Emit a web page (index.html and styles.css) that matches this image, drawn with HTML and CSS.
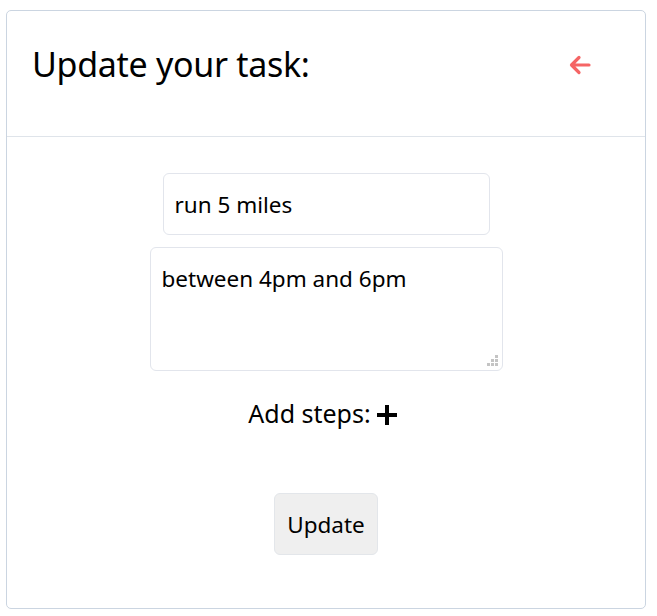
FILE: index.html
```html
<!DOCTYPE html>
<html>
<head>
<meta charset="utf-8">
<link rel="stylesheet" href="styles.css">
</head>
<body>
<div class="card">
  <div class="card-header">
    <h1 class="title">Update your task:</h1>
    <button class="back" aria-label="Back">
      <svg width="22" height="20" viewBox="0 0 22 20"><path d="M20 10H3M10 2.5L2.5 10L10 17.5" fill="none" stroke="#f56565" stroke-width="3.2" stroke-linecap="round" stroke-linejoin="round"/></svg>
    </button>
  </div>
  <div class="card-body">
    <input class="field" type="text" value="run 5 miles">
    <div class="area-wrap">
      <textarea class="area">between 4pm and 6pm</textarea>
      <svg class="grip" width="12" height="12" viewBox="0 0 12 12">
        <g fill="#c4c4c4">
          <rect x="8" y="0" width="3" height="3"/>
          <rect x="4" y="4" width="3" height="3"/>
          <rect x="8" y="4" width="3" height="3"/>
          <rect x="0" y="8" width="3" height="3"/>
          <rect x="4" y="8" width="3" height="3"/>
          <rect x="8" y="8" width="3" height="3"/>
        </g>
      </svg>
    </div>
    <div class="steps">
      <span>Add steps:</span>
      <svg class="plus" width="22" height="22" viewBox="0 0 22 22"><path d="M11 1V21M1 11H21" stroke="#000" stroke-width="4"/></svg>
    </div>
    <button class="update">Update</button>
  </div>
</div>
</body>
</html>
```

FILE: styles.css
```css
html, body {
  margin: 0;
  padding: 0;
  background: #fff;
}
body {
  padding: 10px 11px 7px 6px;
  font-family: "Noto Sans", "Open Sans", sans-serif;
  color: #000;
}
.card {
  border: 1px solid #cbd5e1;
  border-radius: 5px;
  height: 599px;
  box-sizing: border-box;
  display: flex;
  flex-direction: column;
}
.card-header {
  height: 126px;
  box-sizing: border-box;
  border-bottom: 1px solid #dfe4ea;
  display: flex;
  align-items: center;
  justify-content: space-between;
  padding: 0 54px 20px 25px;
}
.title {
  margin: 0;
  font-weight: 400;
  font-size: 34px;
  letter-spacing: -0.3px;
}
.back {
  background: none;
  border: 0;
  padding: 0;
  display: flex;
  position: relative;
  top: 1px;
}
.card-body {
  display: flex;
  flex-direction: column;
  align-items: center;
  padding-top: 36px;
}
.field {
  width: 327px;
  height: 62px;
  box-sizing: border-box;
  border: 1px solid #e2e5ec;
  border-radius: 6px;
  padding: 0 11px;
  font-family: inherit;
  font-size: 22.5px;
  color: #000;
  margin: 0 0 12px 0;
  outline: none;
}
.area-wrap {
  position: relative;
  display: flex;
}
.area {
  width: 353px;
  height: 124px;
  box-sizing: border-box;
  border: 1px solid #e2e5ec;
  border-radius: 6px;
  padding: 16px 11px;
  font-family: inherit;
  font-size: 22.5px;
  line-height: 1.3;
  color: #000;
  margin: 0;
  resize: none;
  outline: none;
}
.grip {
  position: absolute;
  right: 4px;
  bottom: 4px;
}
.steps {
  display: flex;
  align-items: center;
  gap: 5px;
  font-size: 25px;
  margin-top: 25px;
  margin-left: -6px;
}
.plus {
  position: relative;
  top: 2px;
}
.update {
  margin-top: 63px;
  width: 104px;
  height: 62px;
  background: #efefef;
  border: 1px solid #e3e6ea;
  border-radius: 6px;
  font-family: inherit;
  font-size: 22.5px;
  color: #000;
  padding: 0;
}
```
